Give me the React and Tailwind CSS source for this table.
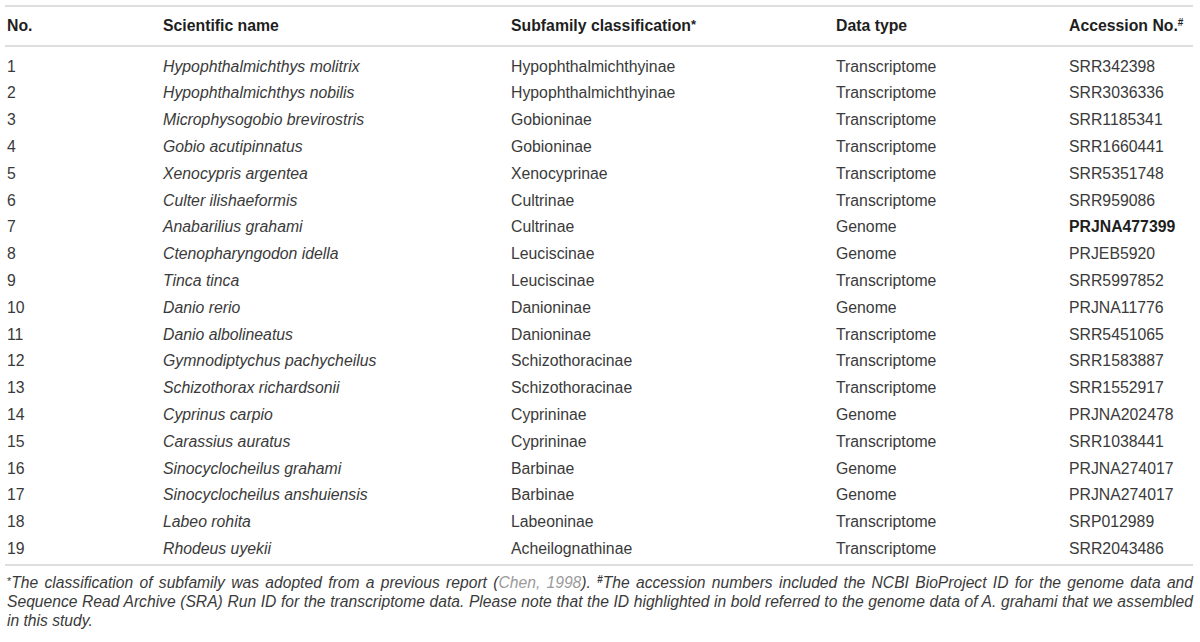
import React from 'react';

const rows = [
  ['1', 'Hypophthalmichthys molitrix', 'Hypophthalmichthyinae', 'Transcriptome', 'SRR342398'],
  ['2', 'Hypophthalmichthys nobilis', 'Hypophthalmichthyinae', 'Transcriptome', 'SRR3036336'],
  ['3', 'Microphysogobio brevirostris', 'Gobioninae', 'Transcriptome', 'SRR1185341'],
  ['4', 'Gobio acutipinnatus', 'Gobioninae', 'Transcriptome', 'SRR1660441'],
  ['5', 'Xenocypris argentea', 'Xenocyprinae', 'Transcriptome', 'SRR5351748'],
  ['6', 'Culter ilishaeformis', 'Cultrinae', 'Transcriptome', 'SRR959086'],
  ['7', 'Anabarilius grahami', 'Cultrinae', 'Genome', 'PRJNA477399'],
  ['8', 'Ctenopharyngodon idella', 'Leuciscinae', 'Genome', 'PRJEB5920'],
  ['9', 'Tinca tinca', 'Leuciscinae', 'Transcriptome', 'SRR5997852'],
  ['10', 'Danio rerio', 'Danioninae', 'Genome', 'PRJNA11776'],
  ['11', 'Danio albolineatus', 'Danioninae', 'Transcriptome', 'SRR5451065'],
  ['12', 'Gymnodiptychus pachycheilus', 'Schizothoracinae', 'Transcriptome', 'SRR1583887'],
  ['13', 'Schizothorax richardsonii', 'Schizothoracinae', 'Transcriptome', 'SRR1552917'],
  ['14', 'Cyprinus carpio', 'Cyprininae', 'Genome', 'PRJNA202478'],
  ['15', 'Carassius auratus', 'Cyprininae', 'Transcriptome', 'SRR1038441'],
  ['16', 'Sinocyclocheilus grahami', 'Barbinae', 'Genome', 'PRJNA274017'],
  ['17', 'Sinocyclocheilus anshuiensis', 'Barbinae', 'Genome', 'PRJNA274017'],
  ['18', 'Labeo rohita', 'Labeoninae', 'Transcriptome', 'SRP012989'],
  ['19', 'Rhodeus uyekii', 'Acheilognathinae', 'Transcriptome', 'SRR2043486'],
];

const App = () => {
  return (
    <div
      className="bg-white w-[1200px] h-[642px] px-[5px] pt-[5px] text-[#3a3a3a]"
      style={{ fontFamily: '"Liberation Sans", Arial, sans-serif' }}
    >
      <table className="w-[1188px] border-collapse text-[15.8px]">
        <thead>
          <tr className="border-t-2 border-b-2 border-[#dedede] h-[40px] text-left text-[#1e1e1e]">
            <th className="w-[158px] pl-[2px] font-bold">No.</th>
            <th className="w-[348px] font-bold">Scientific name</th>
            <th className="w-[325px] font-bold">
              Subfamily classification<span className="text-[13px] align-[2px]">*</span>
            </th>
            <th className="w-[233px] font-bold">Data type</th>
            <th className="font-bold">
              Accession No.<sup className="text-[10px]">#</sup>
            </th>
          </tr>
        </thead>
        <tbody className="border-b-2 border-[#dedede]">
          <tr className="h-[7px]"><td colSpan={5}></td></tr>
          {rows.map((r) => (
            <tr key={r[0]} className="h-[26.8px]">
              <td className="pl-[2px]">{r[0]}</td>
              <td className="italic">{r[1]}</td>
              <td>{r[2]}</td>
              <td>{r[3]}</td>
              <td className={r[0] === '7' ? 'font-bold text-[#1e1e1e]' : ''}>{r[4]}</td>
            </tr>
          ))}
          <tr className="h-[3px]"><td colSpan={5}></td></tr>
        </tbody>
      </table>
      <p className="mt-[6px] pl-[2px] pr-[2px] w-[1190px] italic text-justify text-[15.65px] leading-[18.8px] text-[#3a3a3a]">
        <span className="not-italic text-[11px] align-[3px]">*</span>The classification of subfamily was adopted from a previous report (
        <span className="text-[#9a9a9a]">Chen, 1998</span>). <sup className="not-italic font-bold text-[10px]">#</sup>The accession numbers included the NCBI BioProject ID for the genome data and Sequence Read Archive (SRA) Run ID for the transcriptome data. Please note that the ID highlighted in bold referred to the genome data of A. grahami that we assembled in this study.
      </p>
    </div>
  );
};

export default App;
